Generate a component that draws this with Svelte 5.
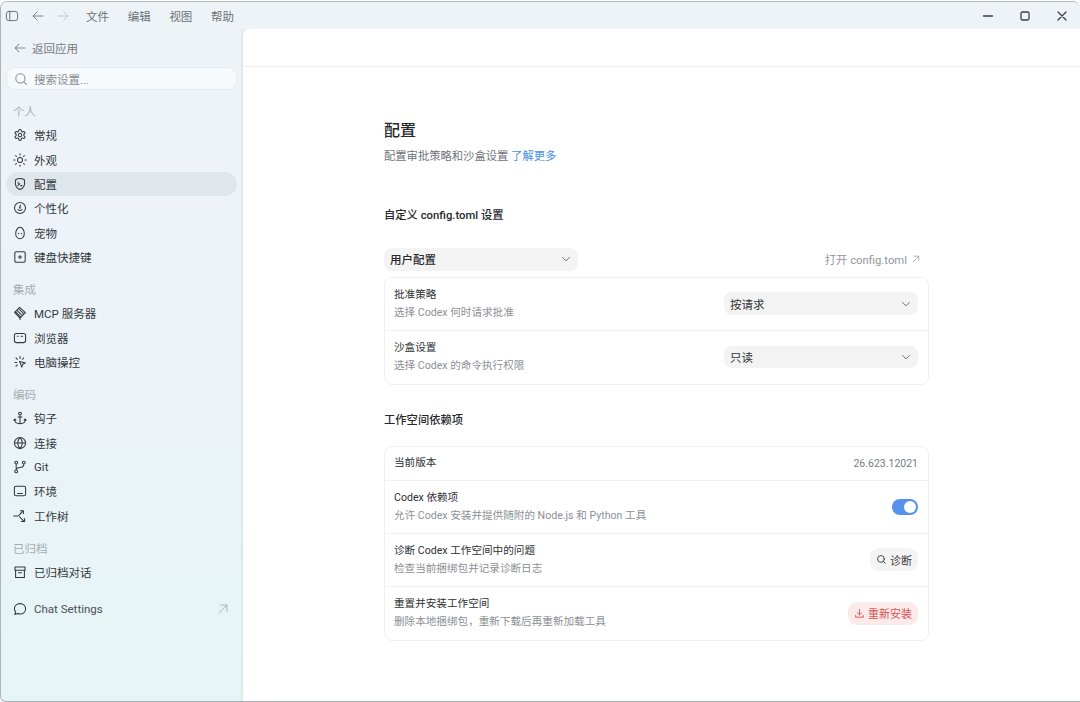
<script>
  const groups = [
    { label: '个人', items: [
      { t: '常规', i: 'gear' }, { t: '外观', i: 'sun' }, { t: '配置', i: 'shield', active: true },
      { t: '个性化', i: 'face' }, { t: '宠物', i: 'egg' }, { t: '键盘快捷键', i: 'key' } ] },
    { label: '集成', items: [ { t: 'MCP 服务器', i: 'mcp' }, { t: '浏览器', i: 'browser' }, { t: '电脑操控', i: 'cursor' } ] },
    { label: '编码', items: [ { t: '钩子', i: 'anchor' }, { t: '连接', i: 'globe' }, { t: 'Git', i: 'git' }, { t: '环境', i: 'env' }, { t: '工作树', i: 'tree' } ] },
    { label: '已归档', items: [ { t: '已归档对话', i: 'archive' } ] }
  ];
  const icons = {
    gear: 'M6.900 1.400h.2a1.100 1.100 0 0 1 1.100 1.100v.1a1.100 1.100 0 0 0 .55.950l.24.140a1.100 1.100 0 0 0 1.100 0l.08-.04a1.100 1.100 0 0 1 1.500.400l.12.210a1.100 1.100 0 0 1-.4 1.500l-.08.050a1.100 1.100 0 0 0-.55.950v.28a1.100 1.100 0 0 0 .55.950l.08.050a1.100 1.100 0 0 1 .4 1.500l-.12.210a1.100 1.100 0 0 1-1.500.400l-.08-.04a1.100 1.100 0 0 0-1.100 0l-.24.140a1.100 1.100 0 0 0-.55.950v.1a1.100 1.100 0 0 1-1.100 1.100h-.2a1.100 1.100 0 0 1-1.100-1.100v-.1a1.100 1.100 0 0 0-.55-.950l-.24-.140a1.100 1.100 0 0 0-1.100 0l-.08.040a1.100 1.100 0 0 1-1.500-.400l-.12-.210a1.100 1.100 0 0 1 .4-1.500l.08-.050a1.100 1.100 0 0 0 .55-.950v-.28a1.100 1.100 0 0 0-.55-.950l-.08-.050a1.100 1.100 0 0 1-.4-1.500l.12-.210a1.100 1.100 0 0 1 1.500-.400l.08.040a1.100 1.100 0 0 0 1.100 0l.24-.140a1.100 1.100 0 0 0 .55-.950v-.1a1.100 1.100 0 0 1 1.100-1.100z M7 5.300a1.700 1.700 0 1 0 0 3.400 1.700 1.700 0 0 0 0-3.400z',
    sun: 'M7 4.500a2.500 2.500 0 1 0 0 5 2.500 2.500 0 0 0 0-5z M7 .8v1.300 M7 11.900v1.300 M.8 7h1.300 M11.900 7h1.300 M2.600 2.600l.9.9 M10.500 10.500l.9.9 M2.600 11.400l.9-.9 M10.500 3.500l.9-.9',
    shield: 'M7 1.500c1.600 0 3 .5 4.400 1.300.5 3 .3 5-.6 6.600-.9 1.600-2.200 2.600-3.800 3.100-1.600-.5-2.900-1.500-3.800-3.100-.9-1.600-1.100-3.600-.6-6.600C4 2 5.400 1.500 7 1.500z M5 5.600l1.600 1.400L5 8.400 M7.600 8.600h1.400',
    face: 'M7 1.500a5.500 5.500 0 1 0 0 11 5.500 5.500 0 0 0 0-11z M7.500 4.200L6.500 6.900h1.200 M4.900 8.600c1.200 1 3 1 4.200 0',
    egg: 'M7 1.300c2.500 0 4.300 3.400 4.300 6.200 0 3-1.900 5.200-4.300 5.200S2.700 10.500 2.700 7.500c0-2.800 1.800-6.200 4.300-6.200z M5.600 7.300v.4 M8.400 7.300v.4',
    key: 'M3.200 1.800h7.600a1.400 1.400 0 0 1 1.400 1.400v7.600a1.400 1.400 0 0 1-1.400 1.400H3.200a1.400 1.400 0 0 1-1.400-1.400V3.200a1.400 1.400 0 0 1 1.400-1.400z M7 5.400v3.200 M5.400 7h3.200',
    mcp: 'M1.600 6.400L6.600 1.400l5.800 5.200-5.400 5.600z M4.400 4.800l4.600 4.400 M6.200 3.300l4.600 4.400 M3 6.200l4.400 4.400 M7 12.200v1.200',
    browser: 'M3.400 2.400h7.200a2 2 0 0 1 2 2v5.200a2 2 0 0 1-2 2H3.400a2 2 0 0 1-2-2V4.400a2 2 0 0 1 2-2z M4.400 5.200h.6 M8 5.200h1.600',
    cursor: 'M6.600 6.400l5.800 1.500-2.600 1.200-1 3z M2 7.400h1.700 M3 3l1.400 1.300 M7 1.600v1.800 M10.600 3L9.400 4.300 M3 11.200l1.300-1.200',
    anchor: 'M7 1.200a1.400 1.400 0 1 0 0 2.800 1.400 1.400 0 0 0 0-2.800z M7 4v8.600 M5 6h4 M1.600 8.200c0 2.800 2.400 4.400 5.400 4.400s5.400-1.600 5.400-4.400 M.9 9.400l.7-1.400 1.200 1 M13.100 9.400l-.7-1.400-1.200 1',
    globe: 'M7 1.400a5.600 5.600 0 1 0 0 11.200A5.600 5.600 0 0 0 7 1.400z M1.400 7h11.200 M7 1.400c-3 3.200-3 8 0 11.200 M7 1.400c3 3.200 3 8 0 11.200',
    git: 'M3.200 1.200a1.400 1.400 0 1 0 0 2.800 1.400 1.400 0 0 0 0-2.800z M3.200 10a1.400 1.400 0 1 0 0 2.800 1.400 1.400 0 0 0 0-2.800z M10.800 1.200a1.400 1.400 0 1 0 0 2.800 1.400 1.400 0 0 0 0-2.800z M3.200 4v6 M10.800 4c0 2.600-1.600 3.400-3.600 3.600-2 .2-4 .6-4 2.400',
    env: 'M3.200 2.200h7.600a1.800 1.800 0 0 1 1.800 1.800v6a1.800 1.800 0 0 1-1.800 1.800H3.200A1.800 1.800 0 0 1 1.400 10V4a1.800 1.800 0 0 1 1.800-1.800z M4.600 9.400h4.800',
    tree: 'M.6 7h4.600L10 2.200 M7.400 1.800h3v2.800 M6.600 7.800l4 4 M11.600 9.400v3.200H8.400 M7.400 4.200v1',
    archive: 'M2 2h10v3.200H2z M2.600 5.200v7.200h8.800V5.200 M5.400 7.800h3.200'
  };
  const rowsA = [
    { t: '批准策略', s: '选择 Codex 何时请求批准', v: '按请求' },
    { t: '沙盒设置', s: '选择 Codex 的命令执行权限', v: '只读' }
  ];
</script>

<div class="win">
  <header class="titlebar">
    <svg class="tb-ic" viewBox="0 0 14 14"><rect x="1.400" y="2.400" width="11.200" height="9.200" rx="2.400"/><path d="M4.800 2.600v8.800"/></svg>
    <svg class="tb-ic nav" viewBox="0 0 14 14"><path d="M12 7H2M6 3L2 7l4 4"/></svg>
    <svg class="tb-ic nav dim" viewBox="0 0 14 14"><path d="M2 7h10M8 3l4 4-4 4"/></svg>
    <nav class="menu"><span>文件</span><span>编辑</span><span>视图</span><span>帮助</span></nav>
    <div class="winctl">
      <svg viewBox="0 0 12 12"><path d="M1.500 6h9"/></svg>
      <svg viewBox="0 0 12 12"><rect x="2" y="2" width="8" height="8" rx="1.400"/></svg>
      <svg viewBox="0 0 12 12"><path d="M2 2l8 8M10 2l-8 8"/></svg>
    </div>
  </header>

  <div class="body">
    <aside class="side">
      <div class="back">
        <svg class="ic faint" viewBox="0 0 14 14"><path d="M12 7H2M6 3L2 7l4 4"/></svg>
        <span>返回应用</span>
      </div>
      <div class="search">
        <svg class="ic faint" viewBox="0 0 14 14"><circle cx="6.400" cy="6.400" r="4.600"/><path d="M10 10l2.400 2.400"/></svg>
        <span>搜索设置...</span>
      </div>
      {#each groups as g}
        <section class="group">
          <div class="glabel">{g.label}</div>
          {#each g.items as it}
            <div class="item" class:active={it.active}>
              <svg class="ic" viewBox="0 0 14 14"><path d={icons[it.i]}/></svg>
              <span>{it.t}</span>
            </div>
          {/each}
        </section>
      {/each}
      <div class="item chat">
        <svg class="ic" viewBox="0 0 14 14"><path d="M7 1.600c3.200 0 5.600 2.200 5.600 5.200S10.200 12 7 12c-.9 0-1.700-.2-2.400-.5l-2.800.9.800-2.500C1.900 9 1.400 8 1.400 6.800 1.400 3.800 3.800 1.600 7 1.600z"/></svg>
        <span>Chat Settings</span>
        <svg class="ic ext" viewBox="0 0 14 14"><path d="M3 11l8-8M4.500 3H11v6.500"/></svg>
      </div>
    </aside>

    <main class="pane">
      <div class="panetop"></div>
      <div class="content">
        <h1>配置</h1>
        <p class="lead">配置审批策略和沙盒设置 <a href="#top">了解更多</a></p>

        <h2 class="h-custom">自定义 config.toml 设置</h2>
        <div class="cfgbar">
          <div class="select">
            <span class="strong">用户配置</span>
            <svg class="chev" viewBox="0 0 10 10"><path d="M1.500 3.500L5 6.800l3.500-3.300"/></svg>
          </div>
          <span class="open">打开 config.toml
            <svg class="openic" viewBox="0 0 10 10"><path d="M1.500 8.500l7-7M2.800 1.500h5.700v5.700"/></svg>
          </span>
        </div>
        <div class="card">
          {#each rowsA as r}
            <div class="row">
              <div><div class="rt">{r.t}</div><div class="rs">{r.s}</div></div>
              <div class="select">
                <span>{r.v}</span>
                <svg class="chev" viewBox="0 0 10 10"><path d="M1.500 3.500L5 6.800l3.500-3.300"/></svg>
              </div>
            </div>
          {/each}
        </div>

        <h2 class="h-dep">工作空间依赖项</h2>
        <div class="card">
          <div class="row short">
            <div class="rt">当前版本</div>
            <div class="ver">26.623.12021</div>
          </div>
          <div class="row">
            <div><div class="rt">Codex 依赖项</div><div class="rs">允许 Codex 安装并提供随附的 Node.js 和 Python 工具</div></div>
            <div class="toggle"><i></i></div>
          </div>
          <div class="row">
            <div><div class="rt">诊断 Codex 工作空间中的问题</div><div class="rs">检查当前捆绑包并记录诊断日志</div></div>
            <div class="btn">
              <svg viewBox="0 0 12 12"><circle cx="5.400" cy="5.400" r="3.700"/><path d="M8.200 8.200l2 2"/></svg>
              诊断
            </div>
          </div>
          <div class="row">
            <div><div class="rt">重置并安装工作空间</div><div class="rs">删除本地捆绑包，重新下载后再重新加载工具</div></div>
            <div class="btn danger">
              <svg viewBox="0 0 12 12"><path d="M6 1.500v6M3.600 5.200L6 7.600l2.400-2.400M1.800 8v2h8.400V8"/></svg>
              重新安装
            </div>
          </div>
        </div>
      </div>
    </main>
  </div>
</div>

<style>
  :global(body) {
    margin: 0;
    background: #fff;
  }
  .win {
    width: 1080px;
    height: 701px;
    margin-top: 1px;
    display: flex;
    flex-direction: column;
    overflow: hidden;
    box-sizing: border-box;
    border-left: 1px solid #aeb5b9;
    border-top: 1px solid #b4babd;
    border-bottom: 1px solid #a9afb2;
    border-radius: 7px 7px 0 6px;
    background: linear-gradient(180deg, #eef3f8 0%, #ecf3f8 55%, #e5f5f6 100%);
    font-family: Roboto, "Noto Sans CJK SC", sans-serif;
    font-size: 11.500px;
    color: #2b2f33;
  }
  .titlebar {
    height: 27px;
    flex: none;
    display: flex;
    align-items: center;
    padding-left: 4px;
    color: #6d7378;
    background: #eef3f8;
  }
  svg {
    fill: none;
    stroke: currentColor;
    stroke-linecap: round;
    stroke-linejoin: round;
  }
  .tb-ic {
    width: 14px;
    height: 14px;
    stroke-width: 1;
    flex: none;
  }
  .nav { margin-left: 12px; color: #7c8287; }
  .nav + .nav { margin-left: 11px; }
  .dim { color: #c3c9cd; }
  .menu {
    display: flex;
    gap: 18.700px;
    margin-left: 16px;
    font-size: 11.500px;
    color: #6c7276;
  }
  .winctl {
    margin-left: auto;
    display: flex;
    gap: 25px;
    padding-right: 12px;
    color: #3c4043;
  }
  .winctl svg { width: 12px; height: 12px; stroke-width: 1.300; }
  .body {
    flex: 1;
    display: flex;
    min-height: 0;
  }
  .side {
    width: 242px;
    flex: none;
    box-sizing: border-box;
    padding: 0 4px 0 5px;
    display: flex;
    flex-direction: column;
    border-right: 2px solid rgba(190, 208, 215, .3);
  }
  .ic {
    width: 14px;
    height: 14px;
    stroke-width: 1.050;
    flex: none;
    color: #33383c;
  }
  .faint { color: #858b90; }
  .back {
    height: 38px;
    display: flex;
    align-items: center;
    gap: 5px;
    padding-left: 7px;
    color: #74797e;
  }
  .search {
    height: 23px;
    display: flex;
    align-items: center;
    gap: 6px;
    padding-left: 7px;
    background: #f7fafc;
    border: 1px solid #e6ebef;
    border-radius: 9px;
    color: #888e93;
    box-sizing: border-box;
    width: 231px;
  }
  .group { margin-bottom: 9.800px; }
  .search + .group { margin-top: 11px; }
  .glabel {
    height: 22px;
    line-height: 22px;
    padding-left: 7px;
    color: #a7acb0;
  }
  .item {
    height: 24.400px;
    width: 231px;
    display: flex;
    align-items: center;
    gap: 7px;
    padding: 0 7px;
    box-sizing: border-box;
    border-radius: 12px;
    color: #34393d;
  }
  .active { background: #e0e7ec; }
  .chat {
    margin-top: 2.800px;
    color: #4b5054;
  }
  .ext {
    margin-left: auto;
    color: #b4b9bd;
  }
  .pane {
    flex: 1;
    min-width: 0;
    background: #fff;
    border-top-left-radius: 8px;
  }
  .panetop {
    height: 38px;
    border-bottom: 1px solid #efefef;
    box-sizing: border-box;
  }
  .content {
    width: 545px;
    margin-left: 141px;
    display: flex;
    flex-direction: column;
  }
  h1 {
    margin: 52px 0 0;
    font-size: 16px;
    font-weight: 500;
    line-height: 24px;
    color: #26292c;
  }
  .lead {
    margin: 4px 0 0;
    line-height: 20px;
    font-size: 11.300px;
    color: #6f7478;
  }
  a { color: #4a90e2; text-decoration: none; }
  h2 {
    margin: 0;
    font-size: 11.300px;
    font-weight: 500;
    line-height: 18px;
    color: #25282b;
  }
  .h-custom { margin-top: 40px; }
  .cfgbar {
    margin-top: 23px;
    display: flex;
    align-items: center;
    justify-content: space-between;
    margin-bottom: 6px;
  }
  .select {
    width: 194px;
    height: 22.500px;
    box-sizing: border-box;
    display: flex;
    align-items: center;
    justify-content: space-between;
    padding: 0 7px 0 6px;
    background: #f3f3f3;
    border-radius: 8px;
    color: #303336;
  }
  .strong { font-weight: 500; color: #26292c; }
  .chev {
    width: 10px;
    height: 10px;
    stroke-width: 1;
    color: #71767a;
  }
  .open {
    display: flex;
    align-items: center;
    gap: 5px;
    padding-right: 9px;
    font-size: 11.300px;
    color: #92979b;
  }
  .openic { width: 8px; height: 8px; stroke-width: .9; }
  .card {
    border: 1px solid #f0f0f0;
    border-radius: 8px;
    overflow: hidden;
  }
  .row {
    height: 53px;
    box-sizing: border-box;
    display: flex;
    align-items: center;
    justify-content: space-between;
    padding: 0 10px 0 9px;
    border-bottom: 1px solid #f1f1f1;
  }
  .row:last-child { border-bottom: 0; }
  .row.short { height: 34px; }
  .rt {
    font-size: 10.600px;
    line-height: 18px;
    color: #2d3033;
  }
  .rs {
    font-size: 10.600px;
    line-height: 18px;
    color: #8b9094;
  }
  .ver {
    font-size: 10.500px;
    color: #777c80;
  }
  .h-dep { margin: 27px 0 16px; }
  .toggle {
    width: 26px;
    height: 16px;
    border-radius: 8px;
    background: #5592ee;
    position: relative;
  }
  .toggle i {
    position: absolute;
    right: 2px;
    top: 2px;
    width: 12px;
    height: 12px;
    border-radius: 50%;
    background: #fff;
  }
  .btn {
    height: 23px;
    display: flex;
    align-items: center;
    gap: 3px;
    padding: 0 6px;
    border-radius: 9px;
    font-size: 11px;
    background: #f4f4f4;
    color: #3a3d40;
  }
  .btn svg { width: 11px; height: 11px; stroke-width: 1; }
  .danger {
    background: #fbeaea;
    color: #d9534f;
  }
</style>
